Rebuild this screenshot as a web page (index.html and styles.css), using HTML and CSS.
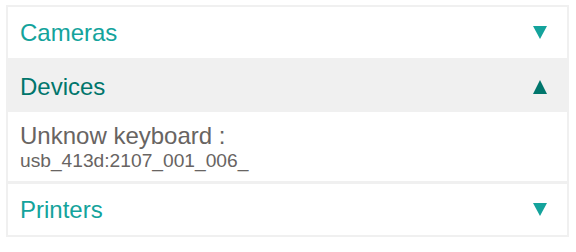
FILE: index.html
```html
<!DOCTYPE html>
<html lang="en">
<head>
    <meta charset="UTF-8">
    <meta name="viewport" content="width=device-width, initial-scale=1.0">
    <title>Hardware</title>
    <link rel="stylesheet" href="styles.css">
</head>
<body>
    <div class="collapsible">
        <div class="item">
            <div class="item-header">
                <span class="item-title">Cameras</span>
                <svg class="arrow" width="14" height="13" viewBox="0 0 14 13"><polygon points="0,0 14,0 7,13" fill="#14a39c"/></svg>
            </div>
        </div>

        <div class="item open">
            <div class="item-header">
                <span class="item-title">Devices</span>
                <svg class="arrow" width="14" height="14" viewBox="0 0 14 14"><polygon points="7,0 14,14 0,14" fill="#00766c"/></svg>
            </div>
            <div class="item-body">
                <div class="device-name">Unknow keyboard :</div>
                <div class="device-id">usb_413d:2107_001_006_</div>
            </div>
        </div>

        <div class="item">
            <div class="item-header">
                <span class="item-title">Printers</span>
                <svg class="arrow" width="14" height="13" viewBox="0 0 14 13"><polygon points="0,0 14,0 7,13" fill="#14a39c"/></svg>
            </div>
        </div>
    </div>
</body>
</html>
```

FILE: styles.css
```css
body {
    margin: 0;
    padding: 5px 7px 0 6px;
    background: #fff;
    font-family: "Liberation Sans", Arial, sans-serif;
}
.collapsible {
    display: flex;
    flex-direction: column;
    gap: 3px;
    background: #f0f0f0;
    padding: 2px;
}
.item {
    background: #fff;
}
.item-header {
    height: 51px;
    display: flex;
    align-items: center;
    justify-content: space-between;
    padding: 0 20px 0 12px;
    color: #14a39c;
    font-size: 24px;
}
.item.open .item-header {
    background: #f0f0f0;
    color: #00766c;
}
.arrow {
    display: block;
}
.item-body {
    padding: 10px 12px 9px;
    color: #686462;
}
.device-name {
    font-size: 24px;
}
.device-id {
    font-size: 19.2px;
}
```
